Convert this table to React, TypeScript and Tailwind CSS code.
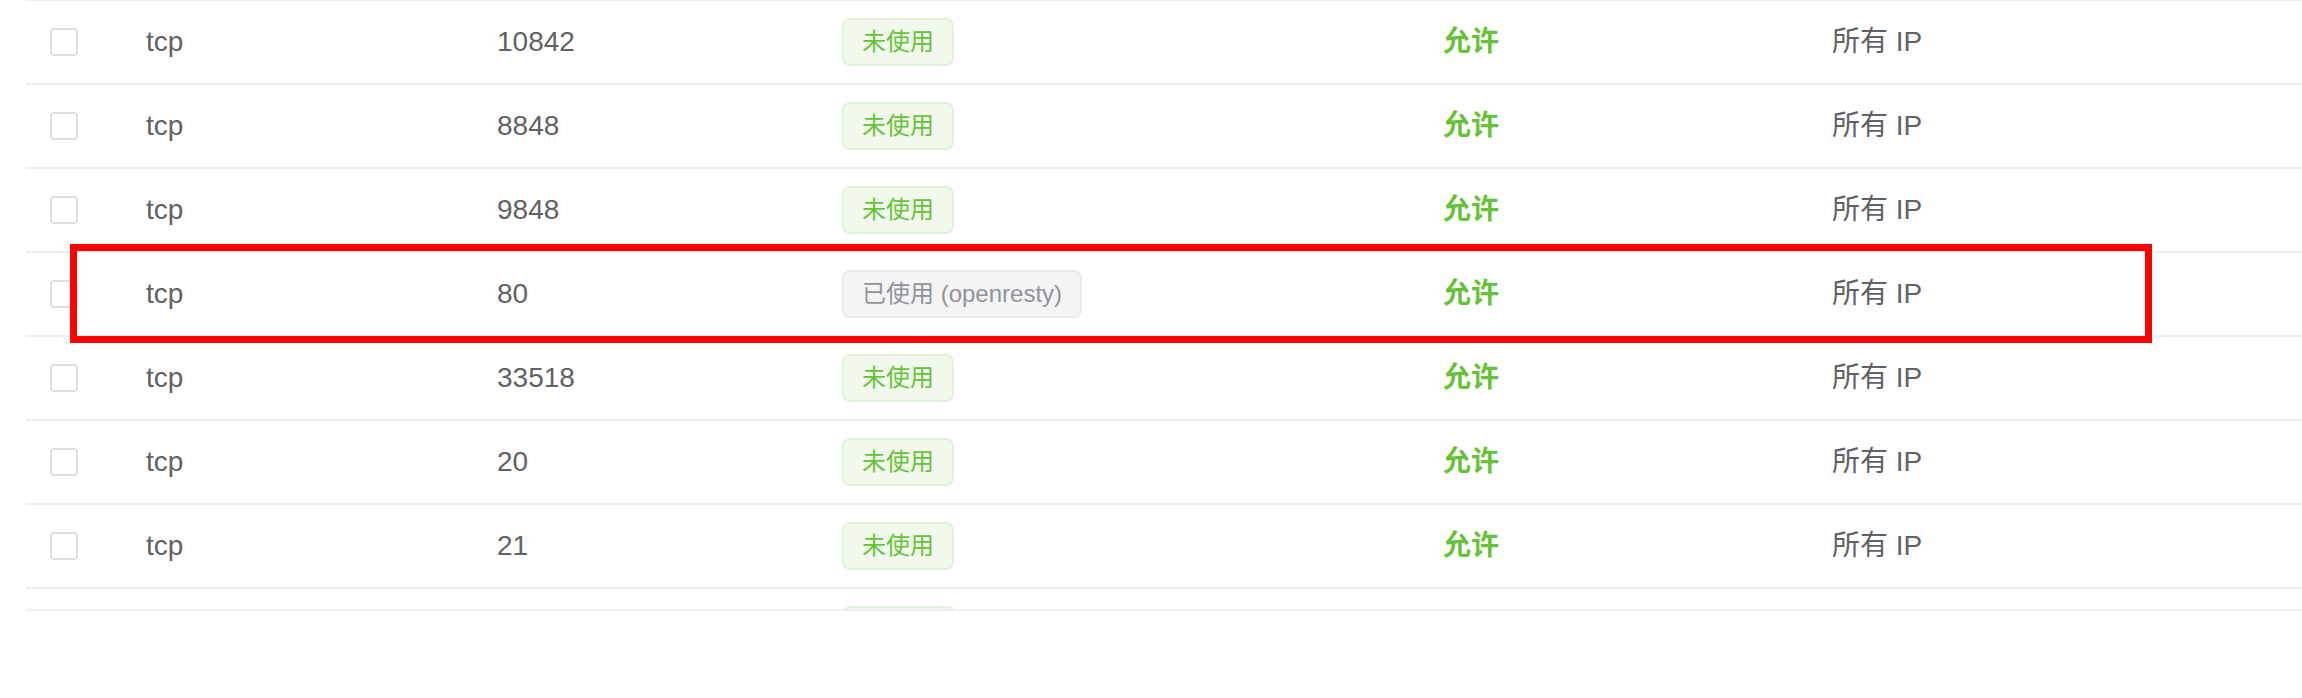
import React from 'react'

type Row = { proto: string; port: string; used?: string }

const rows: Row[] = [
    { proto: 'tcp', port: '10842' },
    { proto: 'tcp', port: '8848' },
    { proto: 'tcp', port: '9848' },
    { proto: 'tcp', port: '80', used: 'openresty' },
    { proto: 'tcp', port: '33518' },
    { proto: 'tcp', port: '20' },
    { proto: 'tcp', port: '21' },
]

const StatusTag = ({ used }: { used?: string }) =>
    used ? (
        <span className="inline-block h-[48px] px-[18px] leading-[44px] text-[24px] rounded-[8px] border-2 border-[#e9e9eb] bg-[#f4f4f5] text-[#909399] whitespace-nowrap">
            已使用 ({used})
        </span>
    ) : (
        <span className="inline-block h-[48px] px-[18px] leading-[44px] text-[24px] rounded-[8px] border-2 border-[#e1f3d8] bg-[#f0f9eb] text-[#67c23a] whitespace-nowrap">
            未使用
        </span>
    )

const PortRow = ({ row }: { row: Row }) => (
    <div className="grid grid-cols-[100px_351px_345px_601px_389px_1fr] items-center h-[84px] border-b-2 border-[#ebeef5] text-[28px] text-[#606266]">
        {/* checkbox column */}
        <div className="pl-[24px] flex items-center">
            <span className="block w-[28px] h-[28px] rounded-[4px] border-2 border-[#dcdfe6] bg-white" />
        </div>
        <div className="pl-[20px]">{row.proto}</div>
        <div className="pl-[20px]">{row.port}</div>
        <div className="pl-[20px] flex items-center">
            <StatusTag used={row.used} />
        </div>
        <div className="pl-[20px] text-[#67c23a] font-semibold">允许</div>
        <div className="pl-[20px]">所有 IP</div>
    </div>
)

export default function App() {
    return (
        <div className="relative w-[2302px] h-[698px] bg-white font-['Liberation_Sans','Noto_Sans_CJK_SC',sans-serif] overflow-hidden">
            <div className="ml-[26px] h-[611px] overflow-hidden border-b-2 border-[#ebeef5]">
                <div className="h-px bg-[#ebeef5]" />
                {rows.map((row, i) => (
                    <PortRow key={i} row={row} />
                ))}
                {/* next row, scrolled out of view: only the tag top shows */}
                <div className="grid grid-cols-[100px_351px_345px_601px_389px_1fr] h-[84px]">
                    <div />
                    <div />
                    <div />
                    <div className="pl-[20px] pt-[17px]">
                        <span className="block w-[114px] h-[48px] rounded-[8px] border-2 border-[#e1f3d8] bg-[#f0f9eb]" />
                    </div>
                </div>
            </div>
            {/* red highlight annotation */}
            <div className="absolute left-[70px] top-[244px] w-[2082px] h-[99px] border-[7px] border-[#ff0000]" />
        </div>
    )
}
